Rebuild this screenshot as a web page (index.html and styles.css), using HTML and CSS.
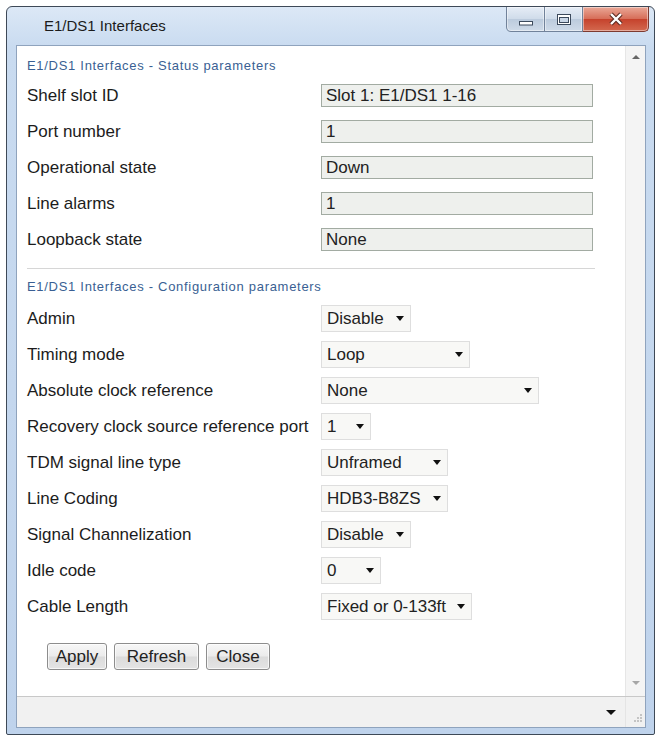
FILE: index.html
```html
<!DOCTYPE html>
<html lang="en">
<head>
<meta charset="utf-8">
<title>E1/DS1 Interfaces</title>
<link rel="stylesheet" href="styles.css">
</head>
<body>
<div class="window">
  <div class="titlebar">
    <span class="title">E1/DS1 Interfaces</span>
    <div class="caption">
      <div class="cap-btn cap-min">
        <svg width="16" height="6" viewBox="0 0 16 6"><rect x="1.5" y="1.5" width="13" height="3.5" fill="#fff" stroke="#3c4a5c" stroke-width="1"/></svg>
      </div>
      <div class="cap-btn cap-max">
        <svg width="16" height="13" viewBox="0 0 16 13"><rect x="1.5" y="1.5" width="13" height="10" fill="#fff" stroke="#3c4a5c" stroke-width="1"/><rect x="3.5" y="4.5" width="9" height="5" fill="#c9d6e6" stroke="#3c4a5c" stroke-width="1"/></svg>
      </div>
      <div class="cap-btn cap-close">
        <svg width="16" height="14" viewBox="0 0 16 14"><path d="M3 2L13 12M13 2L3 12" stroke="#5b2b22" stroke-width="4.5"/><path d="M3 2L13 12M13 2L3 12" stroke="#fff" stroke-width="2.4"/></svg>
      </div>
    </div>
  </div>

  <div class="client">
    <div class="viewport">
      <div class="panel">
        <div class="section-title">E1/DS1 Interfaces - Status parameters</div>
        <div class="form status-form">
          <span class="label">Shelf slot ID</span><span class="field">Slot 1: E1/DS1 1-16</span>
          <span class="label">Port number</span><span class="field">1</span>
          <span class="label">Operational state</span><span class="field">Down</span>
          <span class="label">Line alarms</span><span class="field">1</span>
          <span class="label">Loopback state</span><span class="field">None</span>
        </div>

        <hr class="divider">

        <div class="section-title">E1/DS1 Interfaces - Configuration parameters</div>
        <div class="form config-form">
          <span class="label">Admin</span>
          <div class="select s90"><span>Disable</span><i class="caret"></i></div>
          <span class="label">Timing mode</span>
          <div class="select s149"><span>Loop</span><i class="caret"></i></div>
          <span class="label">Absolute clock reference</span>
          <div class="select s218"><span>None</span><i class="caret"></i></div>
          <span class="label">Recovery clock source reference port</span>
          <div class="select s50"><span>1</span><i class="caret"></i></div>
          <span class="label">TDM signal line type</span>
          <div class="select s127"><span>Unframed</span><i class="caret"></i></div>
          <span class="label">Line Coding</span>
          <div class="select s127"><span>HDB3-B8ZS</span><i class="caret"></i></div>
          <span class="label">Signal Channelization</span>
          <div class="select s90"><span>Disable</span><i class="caret"></i></div>
          <span class="label">Idle code</span>
          <div class="select s60"><span>0</span><i class="caret"></i></div>
          <span class="label">Cable Length</span>
          <div class="select s151"><span>Fixed or 0-133ft</span><i class="caret"></i></div>
        </div>

        <div class="actions">
          <button class="btn btn-apply">Apply</button>
          <button class="btn btn-refresh">Refresh</button>
          <button class="btn btn-close">Close</button>
        </div>
      </div>
      <div class="vscroll">
        <i class="arrow-up"></i>
        <i class="arrow-down"></i>
      </div>
    </div>
    <div class="statusbar">
      <i class="drop"></i>
      <div class="grip-cell">
        <svg width="12" height="12" viewBox="0 0 12 12" fill="#c4c4c4"><rect x="9" y="1" width="2" height="2"/><rect x="6" y="4" width="2" height="2"/><rect x="9" y="4" width="2" height="2"/><rect x="3" y="7" width="2" height="2"/><rect x="6" y="7" width="2" height="2"/><rect x="9" y="7" width="2" height="2"/></svg>
      </div>
    </div>
  </div>
</div>
</body>
</html>
```

FILE: styles.css
```css
* {
  box-sizing: border-box;
}

body {
  margin: 0;
  background: #ffffff;
  font-family: "Liberation Sans", Arial, sans-serif;
  color: #1c1c1c;
}

/* window frame */
.window {
  margin: 6px 0 0 6px;
  width: 649px;
  height: 729px;
  border: 1px solid #3e4957;
  border-radius: 6px 6px 2px 2px;
  background: linear-gradient(#dce8f6, #c9dbf0 40px, #bfd3ec);
  display: flex;
  flex-direction: column;
}

.titlebar {
  flex: none;
  height: 38px;
  display: flex;
  align-items: flex-start;
}

.title {
  font-size: 15px;
  line-height: 38px;
  padding-left: 37px;
  color: #1b1b1b;
}

.caption {
  margin-left: auto;
  margin-right: 5px;
  display: flex;
}

.cap-btn {
  height: 25px;
  border: 1px solid #71829a;
  border-top: none;
  display: flex;
  align-items: center;
  justify-content: center;
  box-shadow: inset 0 0 0 1px rgba(255, 255, 255, 0.45);
}

.cap-min {
  width: 39px;
  border-radius: 0 0 0 5px;
  background: linear-gradient(#e6edf6, #d0dcea 48%, #bccbdd 52%, #cfdbe9);
  padding-top: 8px;
}

.cap-max {
  width: 38px;
  border-left: none;
  background: linear-gradient(#e6edf6, #d0dcea 48%, #bccbdd 52%, #cfdbe9);
}

.cap-close {
  width: 66px;
  border-left: none;
  border-color: #7d3a30;
  border-radius: 0 0 5px 0;
  background: linear-gradient(#eaa897, #d76f5a 48%, #c6432d 52%, #d3694f);
}

/* client area */
.client {
  flex: 1;
  margin: 0 8px 6px 9px;
  border: 1px solid #8fa3bd;
  background: #ffffff;
  display: flex;
  flex-direction: column;
  min-height: 0;
}

.viewport {
  flex: 1;
  display: flex;
  min-height: 0;
}

.panel {
  flex: 1;
  padding: 12px 30px 0 10px;
}

.section-title {
  font-size: 13px;
  line-height: 16px;
  letter-spacing: 0.7px;
  color: #3a5f93;
}

.form {
  display: grid;
  grid-template-columns: 294px auto;
  justify-content: start;
  align-items: center;
  margin-top: 10px;
}

.status-form {
  grid-auto-rows: 23px;
  row-gap: 13px;
}

.config-form {
  grid-auto-rows: 27px;
  row-gap: 9px;
}

.label {
  font-size: 17px;
  line-height: 20px;
  color: #1c1c1c;
}

.field {
  width: 272px;
  height: 23px;
  border: 1px solid #a2aba2;
  background: #eef0ed;
  font-size: 17px;
  line-height: 21px;
  padding-left: 4px;
  color: #222;
}

.divider {
  margin: 17px 0 10px;
  border: none;
  border-top: 1px solid #d6d6d6;
  height: 0;
}

/* drop-down boxes */
.select {
  height: 27px;
  border: 1px solid #dedede;
  background: #f8f8f6;
  display: flex;
  align-items: center;
  justify-content: space-between;
  padding: 0 6px 0 5px;
  font-size: 17px;
  color: #222;
}

.caret {
  width: 0;
  height: 0;
  border-left: 4.5px solid transparent;
  border-right: 4.5px solid transparent;
  border-top: 5px solid #111;
}

.s50 { width: 50px; }
.s60 { width: 60px; }
.s90 { width: 90px; }
.s127 { width: 127px; }
.s149 { width: 149px; }
.s151 { width: 151px; }
.s218 { width: 218px; }

/* buttons */
.actions {
  display: flex;
  gap: 7px;
  margin: 23px 0 0 20px;
}

.btn {
  height: 27px;
  padding: 0;
  border: 1px solid #8d8d8d;
  border-radius: 3px;
  background: linear-gradient(#f7f7f7, #ebebeb 48%, #dbdbdb 52%, #e4e4e4);
  font-family: inherit;
  font-size: 17px;
  color: #222;
  box-shadow: inset 0 0 0 1px rgba(255, 255, 255, 0.7);
}

.btn-apply { width: 60px; }
.btn-refresh { width: 85px; }
.btn-close { width: 64px; }

/* vertical scrollbar */
.vscroll {
  flex: none;
  width: 20px;
  background: #f4f4f4;
  border-left: 1px solid #e6e6e6;
  display: flex;
  flex-direction: column;
  align-items: center;
  justify-content: space-between;
  padding: 9px 0 11px;
}

.arrow-up {
  width: 0;
  height: 0;
  border-left: 4px solid transparent;
  border-right: 4px solid transparent;
  border-bottom: 4px solid #666;
}

.arrow-down {
  width: 0;
  height: 0;
  border-left: 4px solid transparent;
  border-right: 4px solid transparent;
  border-top: 4px solid #a6a6a6;
}

/* bottom bar */
.statusbar {
  flex: none;
  height: 31px;
  border-top: 1px solid #c8c8c8;
  background: #f1f1f1;
  display: flex;
  align-items: center;
  justify-content: flex-end;
}

.drop {
  width: 0;
  height: 0;
  border-left: 5px solid transparent;
  border-right: 5px solid transparent;
  border-top: 5px solid #111;
  margin-right: 9px;
}

.grip-cell {
  width: 20px;
  height: 100%;
  border-left: 1px solid #e4e4e4;
  display: flex;
  align-items: flex-end;
  justify-content: flex-end;
  padding: 0 2px 2px 0;
}
```
